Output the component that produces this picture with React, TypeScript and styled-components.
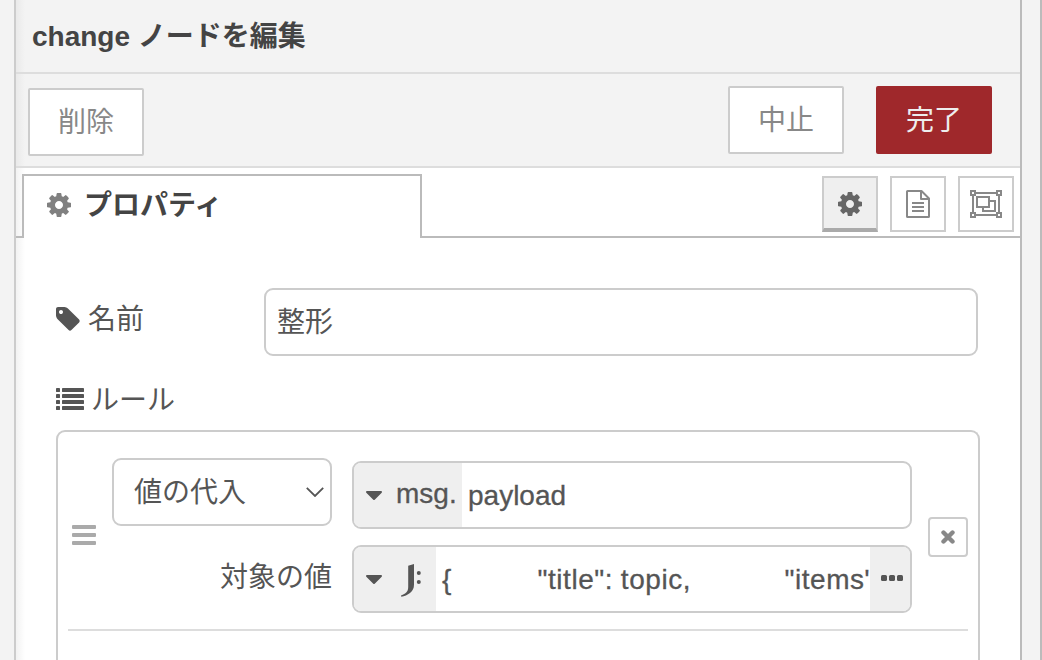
import React from "react";
import styled, { createGlobalStyle, css } from "styled-components";

const GlobalStyle = createGlobalStyle`
  *, *::before, *::after { box-sizing: border-box; }
  html, body { margin: 0; padding: 0; }
  body {
    width: 1042px;
    height: 660px;
    overflow: hidden;
    background: #f3f3f3;
    color: #555;
    font-family: "Liberation Sans", "Noto Sans CJK JP", sans-serif;
    font-size: 28px;
    line-height: 40px;
  }
`;

/* ---------- icons ---------- */

type IconProps = { color?: string };

const Icon = styled.svg`
  display: block;
  flex: none;
`;

const CogIcon = ({ color = "#555" }: IconProps) => (
  <Icon width="24" height="28" viewBox="128 0 1536 1792" fill={color}>
    <path d="M1152 896q0-106-75-181t-181-75-181 75-75 181 75 181 181 75 181-75 75-181zm512-109v222q0 12-8 23t-20 13l-185 28q-19 54-39 91 35 50 107 138 10 12 10 25t-9 23q-27 37-99 108t-94 71q-12 0-26-9l-138-108q-44 23-91 38-16 136-29 186-7 28-36 28h-222q-14 0-24.5-8.5t-11.5-21.5l-28-184q-49-16-90-37l-141 107q-10 9-25 9-14 0-25-11-126-114-165-168-7-10-7-23 0-12 8-23 15-21 51-66.5t54-70.5q-27-50-41-99l-183-27q-13-2-21-12.5t-8-23.5v-222q0-12 8-23t19-13l186-28q14-46 39-92-40-57-107-138-10-12-10-24 0-10 9-23 26-36 98.5-107.5t94.5-71.5q13 0 26 10l138 107q44-23 91-38 16-136 29-186 7-28 36-28h222q14 0 24.5 8.5t11.5 21.5l28 184q49 16 90 37l142-107q9-9 24-9 13 0 25 10 129 119 165 170 7 8 7 22 0 12-8 23-15 21-51 66.5t-54 70.5q26 50 41 98l183 28q13 2 21 12.5t8 23.5z" />
  </Icon>
);

const FileTextIcon = ({ color = "#888" }: IconProps) => (
  <Icon width="24" height="28" viewBox="0 0 24 28" fill="none" stroke={color} strokeWidth="2" strokeLinejoin="round">
    <path d="M1.600 1H15.500L23 8.500V26.400q0 .6-.6.6H1.600q-.6 0-.6-.6V1.600Q1 1 1.600 1z" />
    <path d="M15 1.500V9h7.500" />
    <path d="M6 13h12M6 17h12M6 21h12" />
  </Icon>
);

const ObjectGroupIcon = ({ color = "#888" }: IconProps) => (
  <Icon width="32" height="28" viewBox="0 0 32 28" fill="none" stroke={color} strokeWidth="2">
    <path d="M6 3h20M6 25h20M3 6v16M29 6v16" />
    <path d="M1 1h4v4H1zM27 1h4v4h-4zM1 23h4v4H1zM27 23h4v4h-4z" />
    <path d="M7 7h12v10H7zM20 11h5v10H13v-3" />
  </Icon>
);

const TagIcon = ({ color = "#555" }: IconProps) => (
  <Icon width="24" height="28" viewBox="128 0 1536 1792" fill={color}>
    <path d="M576 448q0-53-37.5-90.5t-90.5-37.5-90.5 37.5-37.5 90.5 37.5 90.5 90.5 37.5 90.5-37.5 37.500-90.5zm1067 576q0 53-37 90l-491 492q-39 37-91 37-53 0-90-37l-715-716q-38-37-64.500-101t-26.500-117v-416q0-52 38-90t90-38h416q53 0 117 26.500t102 64.500l715 714q37 39 37 91z" />
  </Icon>
);

const ListIcon = ({ color = "#555" }: IconProps) => (
  <Icon width="28" height="22" viewBox="0 0 28 22" fill={color}>
    {[0, 6, 12, 18].map((y) => (
      <g key={y}>
        <rect x="0" y={y} width="4" height="4" rx="0.4" />
        <rect x="6" y={y} width="22" height="4" rx="0.4" />
      </g>
    ))}
  </Icon>
);

const BarsIcon = ({ color = "#aaa" }: IconProps) => (
  <Icon width="24" height="20" viewBox="0 0 24 20" fill={color}>
    {[0, 8, 16].map((y) => (
      <rect key={y} x="0" y={y} width="24" height="4" rx="1" />
    ))}
  </Icon>
);

const CaretIcon = () => (
  <Icon width="16" height="9" viewBox="0 0 16 9" fill="#555">
    <path d="M1 0h14q1 .1 1 1 0 .4-.3.7l-7 7q-.7.6-1.4 0l-7-7Q0 1.400 0 1 0 .1 1 0z" />
  </Icon>
);

const ChevronIcon = () => (
  <Icon width="18" height="10" viewBox="0 0 18 10" fill="none" stroke="#555" strokeWidth="1.8">
    <path d="M.8.8 9 9 17.200.8" />
  </Icon>
);

const CloseIcon = () => (
  <Icon width="14" height="14" viewBox="0 0 14 14" fill="none" stroke="#888" strokeWidth="4.400" strokeLinecap="round">
    <path d="M2.500 2.500l9 9M11.500 2.500l-9 9" />
  </Icon>
);

const EllipsisIcon = () => (
  <Icon width="22" height="6" viewBox="0 0 22 6" fill="#555">
    <rect x="0" y="0" width="6" height="6" rx="1.500" />
    <rect x="8" y="0" width="6" height="6" rx="1.500" />
    <rect x="16" y="0" width="6" height="6" rx="1.500" />
  </Icon>
);

const JsonataIcon = () => (
  <Icon width="20" height="33" viewBox="0 0 20 33" fill="#555">
    <path d="M7.200 1.800 13 0v20.500c0 4-1.200 6-4 8.500-2.500 2-5.500 3.300-8.700 3.700L0 31.600c3.200-1.200 5.400-2.700 6.500-4.800.5-1 .7-2.200.7-3.800z" />
    <circle cx="17.800" cy="9" r="2" />
    <circle cx="17.800" cy="18" r="2" />
  </Icon>
);

/* ---------- layout ---------- */

const Screen = styled.div`
  display: flex;
  width: 1042px;
  height: 660px;
  overflow: hidden;
  padding-left: 14px;
  border-right: 2px solid #bbb;
`;

const Tray = styled.section`
  display: flex;
  flex-direction: column;
  width: 1008px;
  border-left: 2px solid #ccc;
  border-right: 2px solid #bbb;
  background: linear-gradient(to right, rgba(0, 0, 0, 0.05), rgba(0, 0, 0, 0) 9px), #fff;
`;

const TrayHeader = styled.header`
  height: 74px;
  padding: 17px 16px 0;
  border-bottom: 2px solid #ddd;
  background: linear-gradient(to right, rgba(0, 0, 0, 0.04), rgba(0, 0, 0, 0) 9px), #f3f3f3;
  color: #444;
  font-weight: 700;
  white-space: nowrap;
`;

const Toolbar = styled.div`
  display: flex;
  align-items: flex-start;
  height: 94px;
  padding: 12px 28px 0 12px;
  border-bottom: 2px solid #ddd;
  background: linear-gradient(to right, rgba(0, 0, 0, 0.04), rgba(0, 0, 0, 0) 9px), #f3f3f3;
`;

const ToolbarSpacer = styled.div`
  flex: 1;
`;

const Button = styled.button<{ $primary?: boolean; $lowered?: boolean }>`
  width: 116px;
  height: 68px;
  padding: 2px 0 0;
  margin: ${(p) => (p.$lowered ? "2px 0 0" : "0")};
  border: 2px solid ${(p) => (p.$primary ? "#9f282b" : "#ccc")};
  border-radius: 2px;
  background: ${(p) => (p.$primary ? "#9f282b" : "#fff")};
  color: ${(p) => (p.$primary ? "#eee" : "#888")};
  font: inherit;

  & + & {
    margin-left: 32px;
  }
`;

const TabBar = styled.nav`
  display: flex;
  height: 70px;
  padding-top: 6px;
`;

const TabEdge = styled.div<{ $grow?: boolean }>`
  display: flex;
  justify-content: flex-end;
  gap: 12px;
  padding: 2px 6px 0 0;
  width: 6px;
  border-bottom: 2px solid #bbb;
  ${(p) => p.$grow && css`flex: 1;`}
`;

const Tab = styled.div`
  display: flex;
  align-items: flex-start;
  gap: 13px;
  width: 400px;
  padding: 10px 0 0 23px;
  border: 2px solid #bbb;
  border-bottom: 0;
  color: #444;
  font-weight: 700;
  white-space: nowrap;

  svg { margin-top: 5px; }
`;

const IconTab = styled.button<{ $active?: boolean }>`
  display: flex;
  justify-content: center;
  padding: 12px 1px 0 0;
  width: 56px;
  height: 56px;
  border: 2px solid #ccc;
  background: #fff;
  ${(p) =>
    p.$active &&
    css`
      border-bottom: 4px solid #aaa;
      background: #efefef;
    `}
`;

const Form = styled.form`
  flex: 1;
  display: flex;
  flex-direction: column;
  padding: 50px 40px 0 39.5px;
`;

const FormRow = styled.div`
  display: flex;
  height: 68px;
`;

const Label = styled.label<{ $gap: number; $iconTop: number }>`
  display: flex;
  gap: ${(p) => p.$gap}px;
  width: 208.5px;
  padding-top: 12px;
  white-space: nowrap;

  svg { margin-top: ${(p) => p.$iconTop}px; }
`;

const Field = styled.div`
  display: flex;
  align-items: center;
  width: 714px;
  height: 68px;
  padding: 2px 12px 0 11px;
  border: 2px solid #ccc;
  border-radius: 9px;
  background: #fff;
`;

const RulesLabel = styled(Label)`
  height: 74px;
  padding-top: 25px;
`;

const RuleList = styled.div`
  flex: 1;
  width: 924px;
  margin-left: 0.5px;
  padding: 0 10px;
  border: 2px solid #ccc;
  border-bottom: 0;
  border-radius: 9px 9px 0 0;
`;

const Rule = styled.div`
  display: flex;
  align-items: flex-start;
  height: 199px;
  padding: 26px 0 0 3.700px;
  border-bottom: 2px solid #ddd;
`;

const Handle = styled.div`
  width: 40.300px;
  padding-top: 67px;
`;

const OperationColumn = styled.div`
  width: 220px;
  margin-right: 20px;
`;

const Select = styled.div`
  display: flex;
  align-items: center;
  justify-content: space-between;
  height: 68px;
  padding: 2px 6px 0 20px;
  border: 2px solid #ccc;
  border-radius: 9px;

  svg { margin-bottom: 3px; }
`;

const TargetLabel = styled.div`
  margin-top: 32px;
  text-align: right;
  white-space: nowrap;
`;

const ValueColumn = styled.div`
  display: flex;
  flex-direction: column;
  gap: 16px;
  width: 560px;
  padding-top: 3px;
`;

const TypedInput = styled.div`
  display: flex;
  height: 68px;
  border: 2px solid #ccc;
  border-radius: 9px;
  overflow: hidden;
  -webkit-text-stroke: 0.3px #555;
`;

const TypeButton = styled.div<{ $width: number }>`
  display: flex;
  align-items: center;
  flex: none;
  width: ${(p) => p.$width}px;
  padding-left: 12px;
  background: #efefef;
`;

const TypeName = styled.span`
  margin: -3px 0 0 14px;
`;

const TypeIcon = styled.span`
  margin: 2px 0 0 19px;
`;

const Value = styled.div`
  flex: 1;
  min-width: 0;
  padding: 13px 0 0 6px;
  overflow: hidden;
  white-space: pre;
`;

const Expression = styled(Value)`
  letter-spacing: 0.550px;
  word-spacing: -0.550px;
`;

const ExpandButton = styled.div`
  display: flex;
  align-items: center;
  justify-content: center;
  flex: none;
  width: 40px;
  padding: 0 0 2px 4px;
  background: #efefef;
`;

const RemoveButton = styled.button`
  display: flex;
  align-items: center;
  justify-content: center;
  width: 40px;
  height: 40px;
  margin: 59px 0 0 16px;
  padding: 0;
  border: 2px solid #ccc;
  border-radius: 4px;
  background: #fff;
`;

export default function App() {
  return (
    <>
      <GlobalStyle />
      <Screen>
        <Tray>
          <TrayHeader>change ノードを編集</TrayHeader>
          <Toolbar>
            <Button $lowered>削除</Button>
            <ToolbarSpacer />
            <Button>中止</Button>
            <Button $primary>完了</Button>
          </Toolbar>
          <TabBar>
            <TabEdge />
            <Tab>
              <CogIcon color="#808080" />
              プロパティ
            </Tab>
            <TabEdge $grow>
              <IconTab $active><CogIcon color="#666" /></IconTab>
              <IconTab><FileTextIcon /></IconTab>
              <IconTab><ObjectGroupIcon /></IconTab>
            </TabEdge>
          </TabBar>
          <Form>
            <FormRow>
              <Label $gap={8.5} $iconTop={5}>
                <TagIcon />
                名前
              </Label>
              <Field>整形</Field>
            </FormRow>
            <RulesLabel $gap={7.5} $iconTop={7}>
              <ListIcon />
              ルール
            </RulesLabel>
            <RuleList>
              <Rule>
                <Handle><BarsIcon /></Handle>
                <OperationColumn>
                  <Select>
                    値の代入
                    <ChevronIcon />
                  </Select>
                  <TargetLabel>対象の値</TargetLabel>
                </OperationColumn>
                <ValueColumn>
                  <TypedInput>
                    <TypeButton $width={108}>
                      <CaretIcon />
                      <TypeName>msg.</TypeName>
                    </TypeButton>
                    <Value>payload</Value>
                  </TypedInput>
                  <TypedInput>
                    <TypeButton $width={82}>
                      <CaretIcon />
                      <TypeIcon><JsonataIcon /></TypeIcon>
                    </TypeButton>
                    <Expression>{'{           "title": topic,            "items"'}</Expression>
                    <ExpandButton><EllipsisIcon /></ExpandButton>
                  </TypedInput>
                </ValueColumn>
                <RemoveButton><CloseIcon /></RemoveButton>
              </Rule>
            </RuleList>
          </Form>
        </Tray>
      </Screen>
    </>
  );
}
